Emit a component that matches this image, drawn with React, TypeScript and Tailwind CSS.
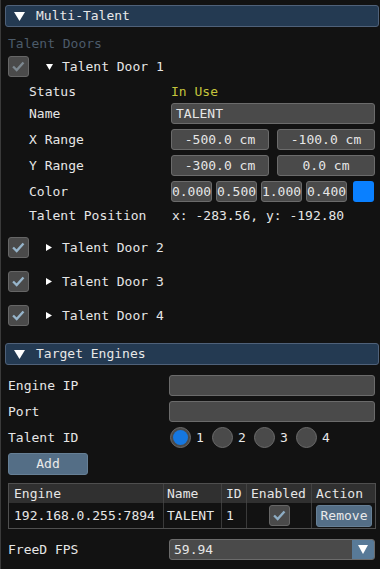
import React from "react";

const DownTri = ({ w = 11, h = 9, color = "#ffffff" }: { w?: number; h?: number; color?: string }) => (
  <svg width={w} height={h} viewBox={`0 0 ${w} ${h}`}>
    <polygon points={`0,0 ${w},0 ${w / 2},${h}`} fill={color} />
  </svg>
);

const RightTri = ({ w = 6, h = 7 }: { w?: number; h?: number }) => (
  <svg width={w} height={h} viewBox={`0 0 ${w} ${h}`}>
    <polygon points={`0,0 ${w},${h / 2} 0,${h}`} fill="#ffffff" />
  </svg>
);

const Check = ({ color }: { color: string }) => (
  <div className="w-[21px] h-[21px] rounded-[3px] bg-[#4a4a4a] border border-[#666666] flex items-center justify-center shrink-0">
    <svg width="21" height="21" viewBox="0 0 21 21">
      <polyline points="4.5,10.5 8.5,14.5 16,6" fill="none" stroke={color} strokeWidth="2.6" strokeLinecap="butt" strokeLinejoin="miter" />
    </svg>
  </div>
);

const Header = ({ title, mt }: { title: string; mt: string }) => (
  <div className={`${mt} ml-[4px] w-[374px] h-[22px] rounded-[3px] bg-[#243a52] border border-[#4f6179] flex items-center`}>
    <div className="ml-[8px] w-[11px] flex items-center">
      <DownTri />
    </div>
    <span className="ml-[11px] text-[#e8e8e8]">{title}</span>
  </div>
);

const Box = ({ children, w, center = true }: { children?: React.ReactNode; w: string; center?: boolean }) => (
  <div
    className={`${w} h-[21px] rounded-[3px] bg-[#4a4a4a] border border-[#6b6b6b] flex items-center overflow-hidden whitespace-nowrap ${center ? "justify-center" : "pl-[4px]"}`}
  >
    {children}
  </div>
);

const Door = ({ n, mt }: { n: number; mt: string }) => (
  <div className={`${mt} h-[21px] pl-[7px] flex items-center`}>
    <Check color="#97b5cb" />
    <div className="ml-[17px] w-[6px] flex items-center">
      <RightTri />
    </div>
    <span className="ml-[10px]">Talent Door {n}</span>
  </div>
);

const Radio = ({ on, label }: { on: boolean; label: string }) => (
  <div className="flex items-center w-[42px]">
    {on ? (
      <div className="w-[21px] h-[21px] rounded-full bg-[#4a4a4a] border border-[#6b6b6b] flex items-center justify-center">
        <div className="w-[15px] h-[15px] rounded-full bg-[#1577e0]" />
      </div>
    ) : (
      <div className="w-[21px] h-[21px] rounded-full bg-[#4a4a4a] border border-[#6b6b6b]" />
    )}
    <span className="ml-[5px] text-[#e8e8e8]">{label}</span>
  </div>
);

export default function App() {
  return (
    <div className="w-[380px] h-[569px] overflow-hidden bg-[#121212] border-l border-[#3a3a3a] text-[#e6e6e6] text-[13px] leading-[16px] font-['DejaVu_Sans_Mono',monospace] flex flex-col">
      <Header title="Multi-Talent" mt="mt-[5px]" />

      <div className="mt-[9px] h-[16px] pl-[7px] text-[#4c5b6a]">Talent Doors</div>

      <div className="mt-[4px] h-[21px] pl-[7px] flex items-center">
        <Check color="#7d8890" />
        <div className="ml-[17px] w-[7px] flex items-center">
          <DownTri w={7} h={6} />
        </div>
        <span className="ml-[9px]">Talent Door 1</span>
      </div>

      <div className="mt-[6px] h-[17px] pl-[28px] flex items-center">
        <span className="w-[142px]">Status</span>
        <span className="text-[#c4c43c]">In Use</span>
      </div>

      <div className="mt-[3px] h-[21px] pl-[28px] flex items-center">
        <span className="w-[142px]">Name</span>
        <Box w="w-[204px]" center={false}>TALENT</Box>
      </div>

      <div className="mt-[5px] h-[21px] pl-[28px] flex items-center">
        <span className="w-[142px]">X Range</span>
        <div className="flex gap-[8px]">
          <Box w="w-[98px]">-500.0 cm</Box>
          <Box w="w-[98px]">-100.0 cm</Box>
        </div>
      </div>

      <div className="mt-[5px] h-[21px] pl-[28px] flex items-center">
        <span className="w-[142px]">Y Range</span>
        <div className="flex gap-[8px]">
          <Box w="w-[98px]">-300.0 cm</Box>
          <Box w="w-[98px]">0.0 cm</Box>
        </div>
      </div>

      <div className="mt-[5px] h-[21px] pl-[28px] flex items-center">
        <span className="w-[142px]">Color</span>
        <div className="flex gap-[4px]">
          <Box w="w-[41px]">0.000</Box>
          <Box w="w-[41px]">0.500</Box>
          <Box w="w-[41px]">1.000</Box>
          <Box w="w-[41px]">0.400</Box>
        </div>
        <div className="ml-[6px] w-[21px] h-[21px] rounded-[3px] bg-[#0a80ff]" />
      </div>

      <div className="mt-[5px] h-[17px] pl-[28px] flex items-center">
        <span className="w-[143px]">Talent Position</span>
        <span>x: -283.56, y: -192.80</span>
      </div>

      <Door n={2} mt="mt-[13px]" />
      <Door n={3} mt="mt-[13px]" />
      <Door n={4} mt="mt-[13px]" />

      <Header title="Target Engines" mt="mt-[17px]" />

      <div className="mt-[10px] h-[21px] pl-[7px] flex items-center">
        <span className="w-[161px]">Engine IP</span>
        <Box w="w-[206px]" />
      </div>

      <div className="mt-[5px] h-[21px] pl-[7px] flex items-center">
        <span className="w-[161px]">Port</span>
        <Box w="w-[206px]" />
      </div>

      <div className="mt-[5px] h-[21px] pl-[7px] flex items-center">
        <span className="w-[162px]">Talent ID</span>
        <Radio on label="1" />
        <Radio on={false} label="2" />
        <Radio on={false} label="3" />
        <Radio on={false} label="4" />
      </div>

      <div className="mt-[5px] pl-[7px]">
        <div className="w-[80px] h-[22px] rounded-[3px] bg-[#546e86] border border-[#667f95] flex items-center justify-center text-[#eaeaea]">
          Add
        </div>
      </div>

      <div className="mt-[8px] ml-[7px] w-[368px] border border-[#4f4f4f] flex flex-col">
        <div className="h-[19px] bg-[#303030] flex items-center">
          <div className="w-[155px] h-full border-r border-[#434343] pl-[5px] flex items-center">Engine</div>
          <div className="w-[58px] h-full border-r border-[#434343] pl-[3px] flex items-center">Name</div>
          <div className="w-[25px] h-full border-r border-[#434343] pl-[4px] flex items-center">ID</div>
          <div className="w-[65px] h-full border-r border-[#434343] pl-[4px] flex items-center">Enabled</div>
          <div className="flex-1 h-full pl-[4px] flex items-center">Action</div>
        </div>
        <div className="h-[25px] flex items-center">
          <div className="w-[155px] h-full border-r border-[#3a3a3a] pl-[5px] flex items-center">192.168.0.255:7894</div>
          <div className="w-[58px] h-full border-r border-[#3a3a3a] pl-[3px] flex items-center">TALENT</div>
          <div className="w-[25px] h-full border-r border-[#3a3a3a] pl-[4px] flex items-center">1</div>
          <div className="w-[65px] h-full border-r border-[#3a3a3a] flex items-center justify-center">
            <Check color="#8eadc4" />
          </div>
          <div className="flex-1 h-full pl-[4px] flex items-center">
            <div className="w-[56px] h-[22px] rounded-[3px] bg-[#546e86] border border-[#667f95] flex items-center justify-center text-[#eaeaea]">
              Remove
            </div>
          </div>
        </div>
      </div>

      <div className="mt-[10px] h-[21px] pl-[7px] flex items-center">
        <span className="w-[161px]">FreeD FPS</span>
        <div className="w-[206px] h-[21px] rounded-[3px] bg-[#4a4a4a] border border-[#6b6b6b] flex items-center overflow-hidden">
          <span className="pl-[4px] flex-1">59.94</span>
          <div className="w-[22px] h-full bg-[#587a98] flex items-center justify-center">
            <DownTri w={10} h={9} />
          </div>
        </div>
      </div>
    </div>
  );
}
